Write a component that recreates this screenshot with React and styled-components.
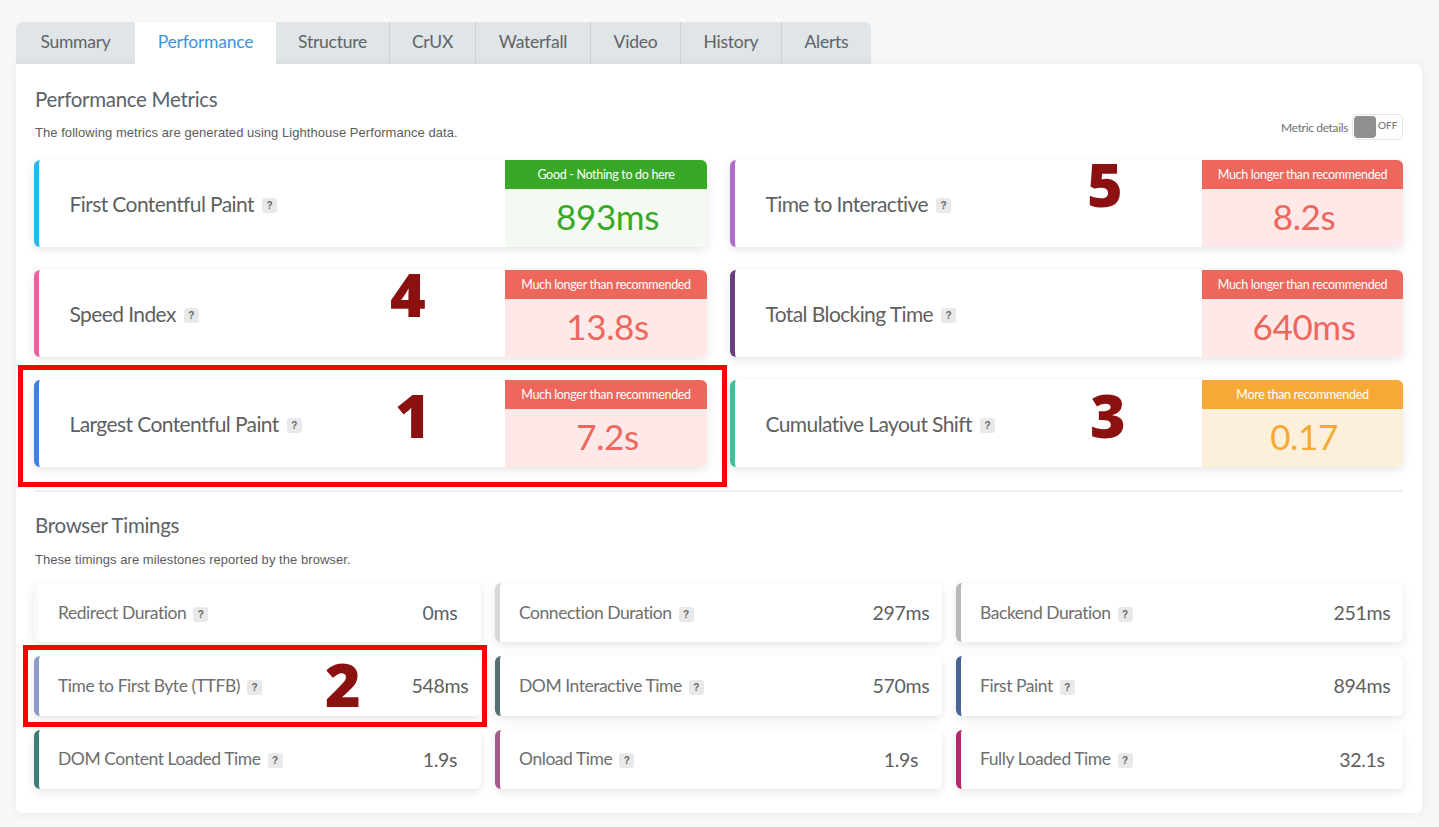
import React from "react";
import styled, { createGlobalStyle } from "styled-components";

const Global = createGlobalStyle`
  html, body { margin: 0; padding: 0; }
  body {
    background-color: #f6f6f6;
    background-image:
      repeating-linear-gradient(0deg, rgba(255,255,255,.35) 0 1px, transparent 1px 4px),
      repeating-linear-gradient(90deg, rgba(255,255,255,.35) 0 1px, transparent 1px 4px);
    font-family: "Lato", "Open Sans", sans-serif;
    color: #5c5c5c;
  }
  * { box-sizing: border-box; }
`;

const Page = styled.div`
  position: relative;
  width: 1439px;
  height: 827px;
  overflow: hidden;
  padding: 22px 17px 14px 16px;
`;
const Tabs = styled.nav`
  display: flex;
  width: max-content;
  height: 42px;
  background: #e0e5e7;
  border-radius: 6px 6px 0 0;
  overflow: hidden;
`;
const Tab = styled.div`
  width: ${p => p.$w}px;
  display: flex;
  align-items: center;
  justify-content: center;
  padding-bottom: 3px;
  font-size: 17.5px;
  letter-spacing: -0.25px;
  color: ${p => (p.$active ? "#3d94dc" : "#5d6468")};
  background: ${p => (p.$active ? "#fff" : "transparent")};
  border-right: ${p => (p.$divider ? "1px solid #ccd1d4" : "0")};
`;
const Panel = styled.main`
  background: #fff;
  border-radius: 0 6px 6px 6px;
  height: 749px;
  padding: 23px 19px 24px 18px;
  box-shadow: 0 0 12px rgba(0,0,0,.06);
`;
const Title = styled.h2`
  margin: 0 0 0 1px;
  font-size: 20.5px;
  font-weight: 400;
  line-height: 24px;
  letter-spacing: -0.3px;
  color: #5c6266;
`;
const DescRow = styled.div`
  display: flex;
  justify-content: space-between;
  align-items: flex-end;
  height: 26px;
  margin: 3px 0 20px 1px;
`;
const Desc = styled.p`
  margin: 0 0 -1px;
  font-family: "Liberation Sans", Arial, sans-serif;
  font-size: 13px;
  letter-spacing: 0.05px;
  line-height: 16px;
  color: #5c5c5c;
`;
const ToggleWrap = styled.div`
  display: flex;
  align-items: center;
  gap: 4px;
  font-size: 12px;
  letter-spacing: -0.35px;
  color: #6b7276;
`;
const Toggle = styled.div`
  width: 51px;
  height: 26px;
  border: 1px solid #e4e4e4;
  border-radius: 5px;
  padding: 1px;
  display: flex;
  gap: 2px;
  font-size: 10px;
  letter-spacing: 0;
  line-height: 18px;
  color: #666;
`;
const Knob = styled.span`
  width: 22px;
  height: 22px;
  border-radius: 4px;
  background: #8f8f8f;
`;
const MetricGrid = styled.section`
  display: grid;
  grid-template-columns: 673px 673px;
  grid-auto-rows: 87px;
  gap: 23px;
`;
const Card = styled.article`
  display: flex;
  background: #fff;
  border-left: 5px solid ${p => p.$bar};
  border-radius: 6px;
  overflow: hidden;
  box-shadow: 0 3px 10px rgba(0,0,0,.1);
`;
const MetricName = styled.div`
  flex: 1;
  display: flex;
  align-items: center;
  gap: 8px;
  padding-left: 30.5px;
  font-size: 21px;
  letter-spacing: -0.6px;
  color: #5f5f5f;
`;
const Help = styled.span`
  width: 15px;
  height: 15px;
  flex: none;
  margin-top: 3px;
  border-radius: 3px;
  background: #e9e9e9;
  color: #666;
  font-family: "Liberation Sans", Arial, sans-serif;
  font-weight: 700;
  font-size: 10px;
  letter-spacing: 0;
  line-height: 15px;
  text-align: center;
`;
const Status = styled.div`
  width: ${p => p.$w}px;
  display: flex;
  flex-direction: column;
  background: ${p => p.$soft};
  color: ${p => p.$strong};
`;
const StatusHead = styled.div`
  height: 29px;
  background: ${p => p.$strong};
  color: #fff;
  font-size: 12.5px;
  letter-spacing: -0.32px;
  line-height: 30.5px;
  text-align: center;
`;
const StatusValue = styled.div`
  flex: 1;
  display: flex;
  align-items: center;
  justify-content: center;
  padding: 0 0 4px 3px;
  font-size: 35px;
  letter-spacing: -0.4px;
`;
const Divider = styled.hr`
  border: 0;
  height: 2px;
  background: #eeeeee;
  margin: 23px 0 21px;
`;
const TimingDesc = styled(Desc)`
  margin: 15px 0 15px 1px;
`;
const TimingGrid = styled.section`
  display: grid;
  grid-template-columns: repeat(3, 447px);
  grid-template-rows: repeat(3, 1fr);
  height: 206px;
  gap: 14px;
`;
const TimingCard = styled(Card)`
  align-items: center;
`;
const TimingName = styled.div`
  flex: 1;
  display: flex;
  align-items: center;
  gap: 7px;
  padding-left: 19px;
  font-size: 17.5px;
  letter-spacing: -0.45px;
  color: #6e6e6e;
  line-height: 22px;
`;
const TimingValue = styled.div`
  width: 82px;
  text-align: center;
  font-size: 19.5px;
  letter-spacing: -0.3px;
  color: #5f5f5f;
`;
const RedBox = styled.div`
  position: absolute;
  left: ${p => p.$x}px;
  top: ${p => p.$y}px;
  width: ${p => p.$w}px;
  height: ${p => p.$h}px;
  border: 5px solid #fe0000;
  pointer-events: none;
`;
const Mark = styled.div`
  position: absolute;
  left: ${p => p.$x}px;
  top: ${p => p.$y}px;
  font-family: "Noto Sans", "DejaVu Sans", sans-serif;
  font-weight: 900;
  font-size: 61px;
  line-height: 62px;
  color: #8b1111;
`;

const RED = { strong: "#ee675c", soft: "#ffe9e8", label: "Much longer than recommended" };
const GREEN = { strong: "#38a926", soft: "#f4faf2", label: "Good - Nothing to do here" };
const ORANGE = { strong: "#f7a935", soft: "#fdf0da", label: "More than recommended" };

const tabs = [
  ["Summary", 119], ["Performance", 141, true], ["Structure", 114, false, true], ["CrUX", 86, false, true],
  ["Waterfall", 115, false, true], ["Video", 90, false, true], ["History", 101, false, true], ["Alerts", 89],
];
const metrics = [
  ["First Contentful Paint", "#29b6f6", GREEN, "893ms", 202],
  ["Time to Interactive", "#b36bd0", RED, "8.2s", 201],
  ["Speed Index", "#f25ea0", RED, "13.8s", 202],
  ["Total Blocking Time", "#6a3f80", RED, "640ms", 201],
  ["Largest Contentful Paint", "#3f7fe8", RED, "7.2s", 202],
  ["Cumulative Layout Shift", "#42bf9a", ORANGE, "0.17", 201],
];
const timings = [
  ["Redirect Duration", "#fafafa", "0ms"],
  ["Connection Duration", "#d8d8d8", "297ms"],
  ["Backend Duration", "#bbb8ba", "251ms"],
  ["Time to First Byte (TTFB)", "#8b9cc8", "548ms"],
  ["DOM Interactive Time", "#566f70", "570ms"],
  ["First Paint", "#4a6491", "894ms"],
  ["DOM Content Loaded Time", "#3a8078", "1.9s"],
  ["Onload Time", "#a35b87", "1.9s"],
  ["Fully Loaded Time", "#b8286b", "32.1s"],
];

export default function App() {
  return (
    <Page>
      <Global />
      <Tabs>
        {tabs.map(([t, w, a, d]) => (
          <Tab key={t} $w={w} $active={a} $divider={d}>{t}</Tab>
        ))}
      </Tabs>
      <Panel>
        <Title>Performance Metrics</Title>
        <DescRow>
          <Desc>The following metrics are generated using Lighthouse Performance data.</Desc>
          <ToggleWrap>
            Metric details
            <Toggle><Knob />OFF</Toggle>
          </ToggleWrap>
        </DescRow>
        <MetricGrid>
          {metrics.map(([name, bar, s, v, w]) => (
            <Card key={name} $bar={bar}>
              <MetricName>{name}<Help>?</Help></MetricName>
              <Status $w={w} $soft={s.soft} $strong={s.strong}>
                <StatusHead $strong={s.strong}>{s.label}</StatusHead>
                <StatusValue>{v}</StatusValue>
              </Status>
            </Card>
          ))}
        </MetricGrid>
        <Divider />
        <Title>Browser Timings</Title>
        <TimingDesc>These timings are milestones reported by the browser.</TimingDesc>
        <TimingGrid>
          {timings.map(([name, bar, v]) => (
            <TimingCard key={name} $bar={bar}>
              <TimingName>{name}<Help>?</Help></TimingName>
              <TimingValue>{v}</TimingValue>
            </TimingCard>
          ))}
        </TimingGrid>
      </Panel>
      <RedBox $x={18} $y={365} $w={709} $h={122} />
      <RedBox $x={23} $y={645} $w={464} $h={82} />
      <Mark $x={395} $y={384}>1</Mark>
      <Mark $x={325} $y={653}>2</Mark>
      <Mark $x={1090} $y={384}>3</Mark>
      <Mark $x={390} $y={263}>4</Mark>
      <Mark $x={1087} $y={153}>5</Mark>
    </Page>
  );
}
